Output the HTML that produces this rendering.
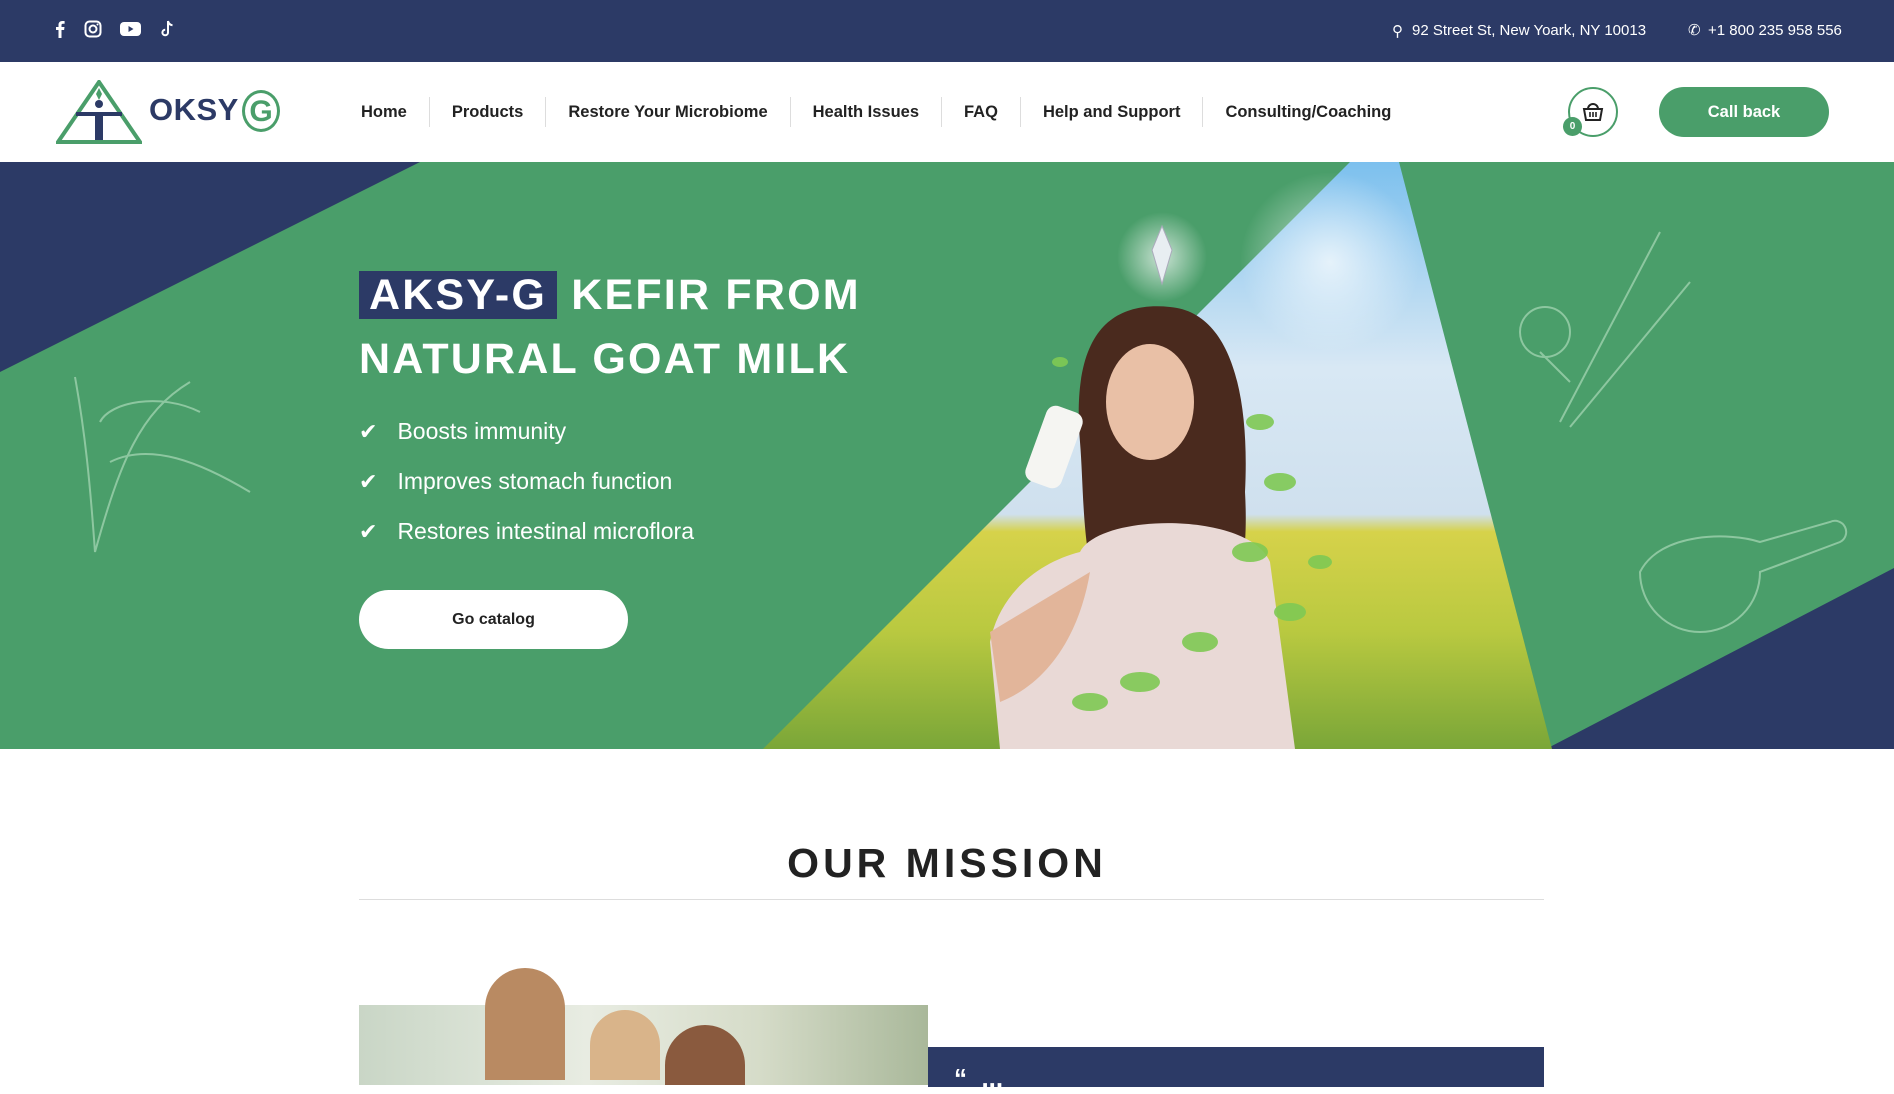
<!DOCTYPE html>
<html><head><meta charset="utf-8"><style>
*{margin:0;padding:0;box-sizing:border-box}
body{width:1894px;height:1080px;overflow:hidden;background:#fff;font-family:"Liberation Sans",sans-serif;position:relative}
.top{position:absolute;left:0;top:0;width:1894px;height:62px;background:#2c3a66;color:#fff;font-size:15px}
.top .i{position:absolute;top:20px}
.nav{position:absolute;top:62px;left:0;width:1894px;height:100px;background:#fff}
.menu{position:absolute;left:339px;top:41px;display:flex;font-size:16.5px;font-weight:bold;color:#222}
.menu span{padding:0 22px;border-left:1px solid #ddd;line-height:30px;margin-top:-6px}
.menu span:first-child{border-left:none}
.hero{position:absolute;top:162px;left:0;width:1894px;height:587px;background:#4a9e6a;overflow:hidden}
h1{position:absolute;left:359px;top:270px;color:#fff;font-size:43px;font-weight:bold;letter-spacing:2.2px;line-height:64px}
h1 b{background:#2c3a66;padding:0 10px;}
.li{position:absolute;left:359px;color:#fff;font-size:23px}
.li:before{content:"✔";margin-right:20px;font-size:22px}
.btn{position:absolute;left:359px;top:590px;width:269px;height:59px;background:#fff;border-radius:30px;text-align:center;line-height:59px;font-weight:bold;font-size:16px;color:#222}
</style></head><body>
<div class="top">
<svg class="i" style="left:55px" width="10" height="18" viewBox="0 0 10 18"><path d="M6.5 18V10h2.6l.4-3H6.5V5.2c0-.9.3-1.5 1.5-1.5H9.6V1.1C9.3 1 8.4 1 7.3 1 5 1 3.5 2.4 3.5 4.9V7H1v3h2.5v8z" fill="#fff"/></svg>
<svg class="i" style="left:84px" width="18" height="18" viewBox="0 0 18 18"><rect x="1.5" y="1.5" width="15" height="15" rx="4" fill="none" stroke="#fff" stroke-width="2"/><circle cx="9" cy="9" r="3.5" fill="none" stroke="#fff" stroke-width="2"/><circle cx="13.5" cy="4.5" r="1" fill="#fff"/></svg>
<svg class="i" style="left:120px" width="21" height="18" viewBox="0 0 21 18"><rect x="0" y="2" width="21" height="14" rx="4" fill="#fff"/><path d="M8.5 6v6l5-3z" fill="#2c3a66"/></svg>
<svg class="i" style="left:160px" width="16" height="18" viewBox="0 0 16 18"><path d="M8 1v11.5a2.8 2.8 0 1 1-2.8-2.8" fill="none" stroke="#fff" stroke-width="2"/><path d="M8 1c.5 2.5 2 4 4.5 4.2" fill="none" stroke="#fff" stroke-width="2"/></svg>
<div style="position:absolute;left:1392px;top:22px;font-size:15px">⚲</div>
<div style="position:absolute;left:1412px;top:22px">92 Street St, New Yoark, NY 10013</div>
<div style="position:absolute;left:1688px;top:21px">✆</div>
<div style="position:absolute;left:1708px;top:22px">+1 800 235 958 556</div>
</div>
<div class="nav">
<svg style="position:absolute;left:56px;top:18px" width="86" height="64" viewBox="0 0 86 64"><path d="M43 2L2 62h82z" fill="none" stroke="#4a9e6a" stroke-width="4"/><circle cx="43" cy="24" r="4" fill="#2c3a66"/><path d="M20 32h46v4H47v24h-8V36H20z" fill="#2c3a66"/><path d="M43 8l3 6-3 6-3-6z" fill="#4a9e6a"/></svg>
<div style="position:absolute;left:149px;top:30px;font-size:31px;font-weight:bold;color:#2c3a66;letter-spacing:0.5px">OKSY</div>
<div style="position:absolute;left:242px;top:28px;width:38px;height:42px;border:3px solid #4a9e6a;border-radius:50%;color:#4a9e6a;font-size:30px;font-weight:bold;text-align:center;line-height:37px">G</div>
<div class="menu"><span>Home</span><span>Products</span><span>Restore Your Microbiome</span><span>Health Issues</span><span>FAQ</span><span>Help and Support</span><span>Consulting/Coaching</span></div>
<div style="position:absolute;left:1568px;top:25px;width:50px;height:50px;border:2px solid #4a9e6a;border-radius:50%"></div>
<svg style="position:absolute;left:1582px;top:38px" width="22" height="22" viewBox="0 0 22 22"><path d="M6 9a5 5 0 0 1 10 0" fill="none" stroke="#222" stroke-width="2"/><path d="M2 9h18l-2 11H4z" fill="none" stroke="#222" stroke-width="2"/><path d="M8 12v5M11 12v5M14 12v5" stroke="#222" stroke-width="1.6"/></svg>
<div style="position:absolute;left:1563px;top:55px;width:19px;height:19px;border-radius:50%;background:#4a9e6a;color:#fff;font-size:10px;font-weight:bold;text-align:center;line-height:19px">0</div>
<div style="position:absolute;left:1659px;top:25px;width:170px;height:50px;border-radius:25px;background:#4a9e6a;color:#fff;font-weight:bold;font-size:16.5px;text-align:center;line-height:50px">Call back</div>
</div>
<div class="hero">
<svg width="1894" height="587" style="position:absolute;left:0;top:0">
<defs>
<linearGradient id="sky" x1="0" y1="0" x2="0" y2="1"><stop offset="0" stop-color="#7cc0ee"/><stop offset=".35" stop-color="#d8e8f4"/><stop offset=".6" stop-color="#cfe0ee"/><stop offset=".63" stop-color="#d6d24a"/><stop offset=".8" stop-color="#b9c940"/><stop offset="1" stop-color="#7aa638"/></linearGradient>
<radialGradient id="glow" cx=".5" cy=".5" r=".5"><stop offset="0" stop-color="#fff" stop-opacity=".7"/><stop offset="1" stop-color="#fff" stop-opacity="0"/></radialGradient>
</defs>
<polygon points="0,0 420,0 0,210" fill="#2c3a66"/>
<polygon points="1894,406 1894,587 1546,587" fill="#2c3a66"/>
<polygon points="1350,0 1399,0 1552,587 763,587" fill="url(#sky)"/>
<circle cx="1330" cy="100" r="90" fill="url(#glow)"/>
<circle cx="1162" cy="95" r="45" fill="url(#glow)"/>
<path d="M1162 64l10 24-10 34-10-34z" fill="#e8eef2" stroke="#aab" stroke-width="1"/>
<path d="M1080 280 C1070 160 1120 140 1170 145 C1230 150 1250 230 1245 330 C1250 420 1230 460 1200 480 L1120 470 C1080 430 1085 340 1080 280z" fill="#4a2a1e"/>
<ellipse cx="1150" cy="240" rx="44" ry="58" fill="#e9c0a6"/>
<path d="M1080 390 C1100 350 1250 350 1270 400 L1295 587 L1000 587 L990 480 C1000 430 1040 400 1080 390z" fill="#e9d9d6"/>
<path d="M1090 410 C1080 470 1050 520 1000 540 L990 470z" fill="#e2b59a"/>
<rect x="1035" y="245" width="38" height="80" rx="10" fill="#f5f5f2" transform="rotate(20 1054 285)"/>
<g fill="#7fc954" opacity=".9"><ellipse cx="1260" cy="260" rx="14" ry="8"/><ellipse cx="1280" cy="320" rx="16" ry="9"/><ellipse cx="1250" cy="390" rx="18" ry="10"/><ellipse cx="1290" cy="450" rx="16" ry="9"/><ellipse cx="1200" cy="480" rx="18" ry="10"/><ellipse cx="1140" cy="520" rx="20" ry="10"/><ellipse cx="1090" cy="540" rx="18" ry="9"/><ellipse cx="1320" cy="400" rx="12" ry="7"/><ellipse cx="1060" cy="200" rx="8" ry="5"/></g>
<g fill="none" stroke="#a9d8b8" stroke-width="2" opacity=".7">
<path d="M95 390 C90 320 85 270 75 215 M95 390 C120 300 140 250 190 220 M110 300 C150 280 200 300 250 330 M100 260 C110 240 160 230 200 250"/>
<path d="M1560 260 L1660 70 M1570 265 L1690 120 M1540 190 l30 30 M1520 170 a25 25 0 1 0 50 0 a25 25 0 1 0 -50 0"/>
<path d="M1640 410 a60 60 0 0 0 120 0 l80 -30 a10 10 0 0 0 -10 -20 l-70 20 C1730 370 1660 370 1640 410z"/>
</g>
</svg>
<h1 style="top:101px"><b>AKSY-G</b> KEFIR FROM<br>NATURAL GOAT MILK</h1>
</div>
<div class="li" style="top:418px">Boosts immunity</div>
<div class="li" style="top:468px">Improves stomach function</div>
<div class="li" style="top:518px">Restores intestinal microflora</div>
<div class="btn">Go catalog</div>
<div style="position:absolute;left:0;width:1894px;top:840px;text-align:center;font-size:41px;font-weight:bold;letter-spacing:4px;color:#222">OUR MISSION</div>
<div style="position:absolute;left:359px;top:899px;width:1185px;height:1px;background:#ddd"></div>
<div style="position:absolute;left:359px;top:1005px;width:569px;height:80px;background:linear-gradient(90deg,#c9d6c6,#e8ece2 40%,#d6dcc9 70%,#a9b89a)"></div>
<div style="position:absolute;left:485px;top:968px;width:80px;height:112px;border-radius:40px 40px 0 0;background:#b98a62"></div>
<div style="position:absolute;left:590px;top:1010px;width:70px;height:70px;border-radius:35px 35px 0 0;background:#d9b48a"></div>
<div style="position:absolute;left:665px;top:1025px;width:80px;height:60px;border-radius:40px 40px 0 0;background:#8a5a3e"></div>
<div style="position:absolute;left:928px;top:1047px;width:616px;height:40px;background:#2c3a66;color:#fff;font-size:26px;font-weight:bold;padding:16px 0 0 26px">“ &nbsp;...</div>
</body></html>
